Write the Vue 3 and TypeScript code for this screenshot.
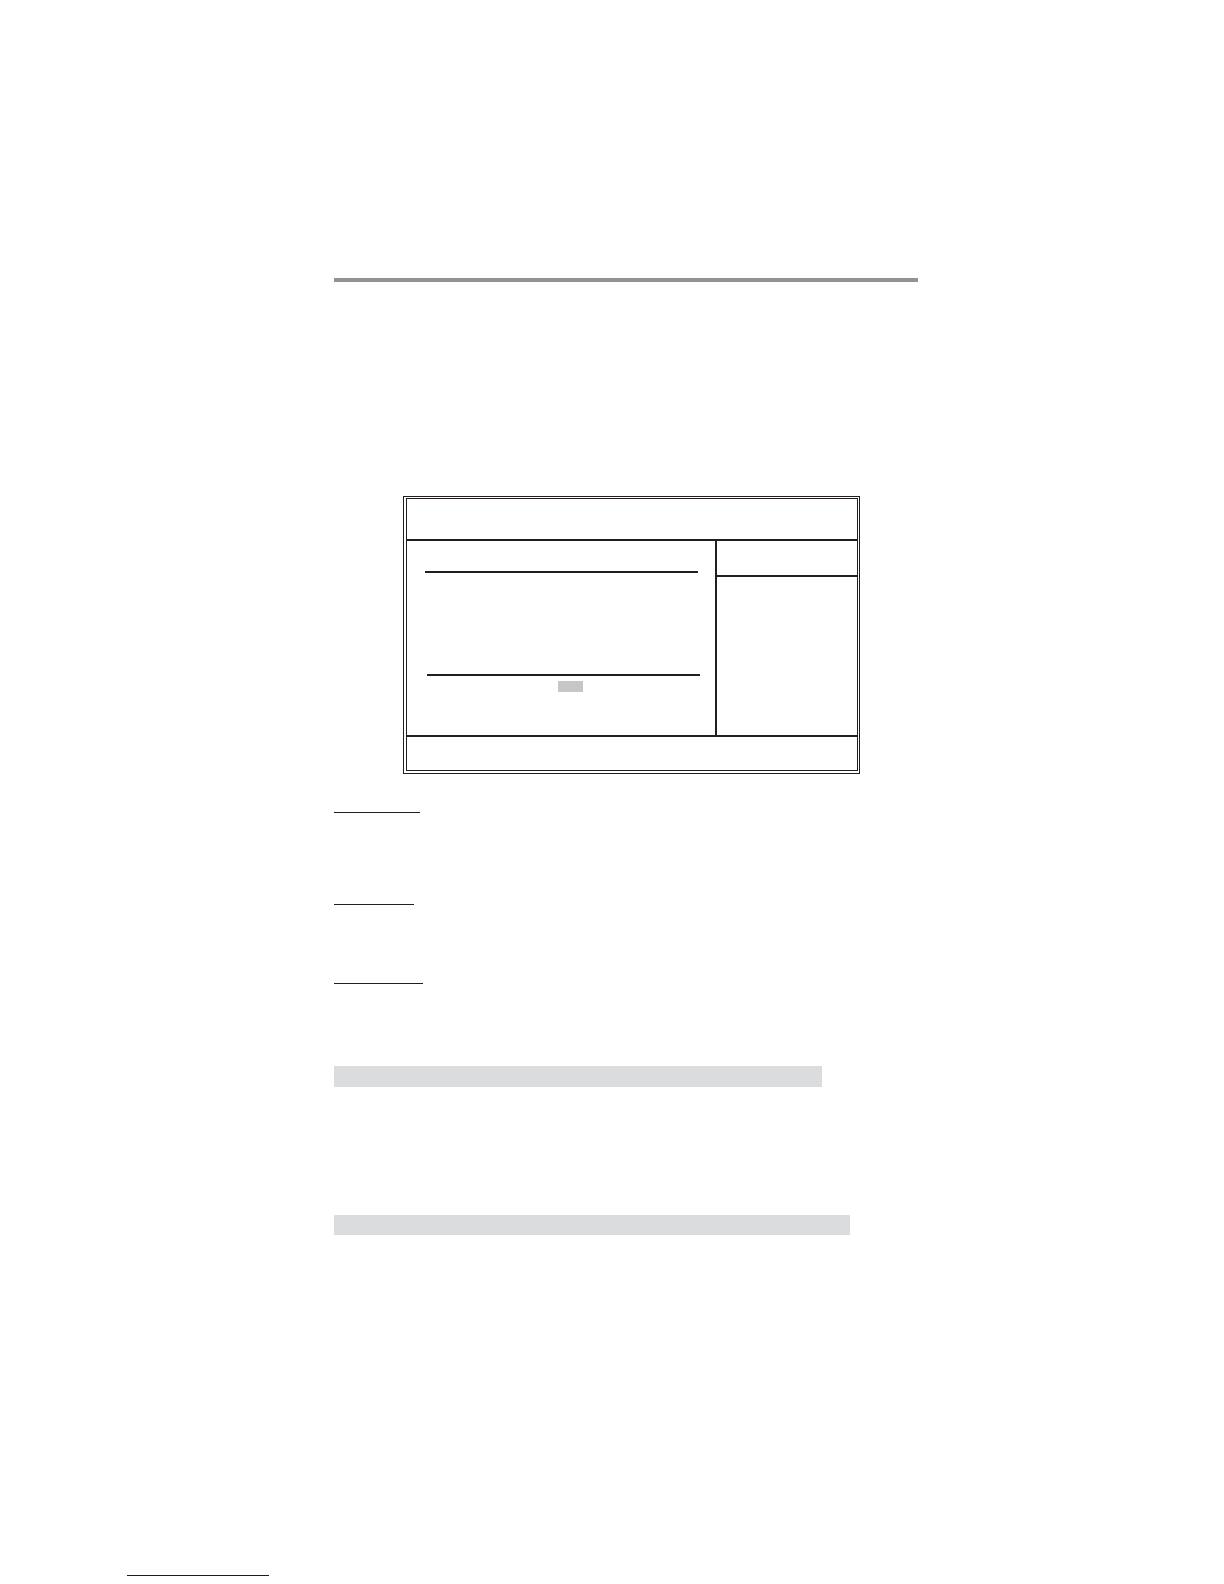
<script setup lang="ts">
interface Heading {
  id: string
  width: number
}

const headings: Heading[] = [
  { id: 'first', width: 86 },
  { id: 'second', width: 80 },
  { id: 'third', width: 89 },
]
</script>

<template>
  <div class="page">
    <main class="content">
      <hr class="page-rule" />

      <section class="screen">
        <div class="screen-inner">
          <header class="screen-header"></header>
          <div class="screen-body">
            <div class="settings">
              <hr class="rule rule-upper" />
              <hr class="rule rule-lower" />
              <div class="selected"></div>
            </div>
            <aside class="help">
              <div class="help-title"></div>
            </aside>
          </div>
          <footer class="screen-footer"></footer>
        </div>
      </section>

      <hr
        v-for="heading in headings"
        :key="heading.id"
        class="underline"
        :class="heading.id"
        :style="{ width: heading.width + 'px' }"
      />

      <div class="band band-short"></div>
      <div class="band band-long"></div>
    </main>
    <footer class="page-footer">
      <hr class="link-line" />
    </footer>
  </div>
</template>

<style>
body {
  margin: 0;
  background: #fff;
}
</style>

<style scoped>
.page {
  display: flex;
  flex-direction: column;
  font-family: "Liberation Sans", sans-serif;
}

hr {
  border: 0;
  margin: 0;
}

.content {
  display: flex;
  flex-direction: column;
  padding: 278px 306px 0 334px;
}

.page-rule {
  height: 4px;
  background: #929191;
}

.screen {
  margin: 214px 58px 0 69px;
  padding: 1px 1px 2px 2px;
  border: 1px solid #231f20;
}

.screen-inner {
  border: 1px solid #231f20;
}

.screen-header {
  height: 40px;
  border-bottom: 2px solid #231f20;
}

.screen-body {
  display: flex;
}

.settings {
  flex: 1;
  padding: 30px 0 43px;
}

.rule {
  height: 2px;
  background: #231f20;
}

.rule-upper {
  margin: 0 17px 0 18px;
}

.rule-lower {
  margin: 101px 15px 0 20px;
}

.selected {
  width: 25px;
  height: 11px;
  margin: 5px 0 0 151px;
  background: #c6c6c6;
}

.help {
  width: 140px;
  border-left: 2px solid #231f20;
}

.help-title {
  height: 34px;
  border-bottom: 2px solid #231f20;
}

.screen-footer {
  height: 33px;
  border-top: 2px solid #231f20;
}

.underline {
  height: 1px;
  background: #231f20;
}

.first {
  margin-top: 38px;
}

.second {
  margin-top: 91px;
}

.third {
  margin-top: 78px;
}

.band {
  background: #dbdcdd;
}

.band-short {
  height: 21px;
  margin: 82px 96px 0 0;
}

.band-long {
  height: 20px;
  margin: 128px 68px 0 0;
}

.page-footer {
  padding: 340px 0 8px 127px;
}

.link-line {
  width: 142px;
  height: 1px;
  background: #0c0c98;
}
</style>
